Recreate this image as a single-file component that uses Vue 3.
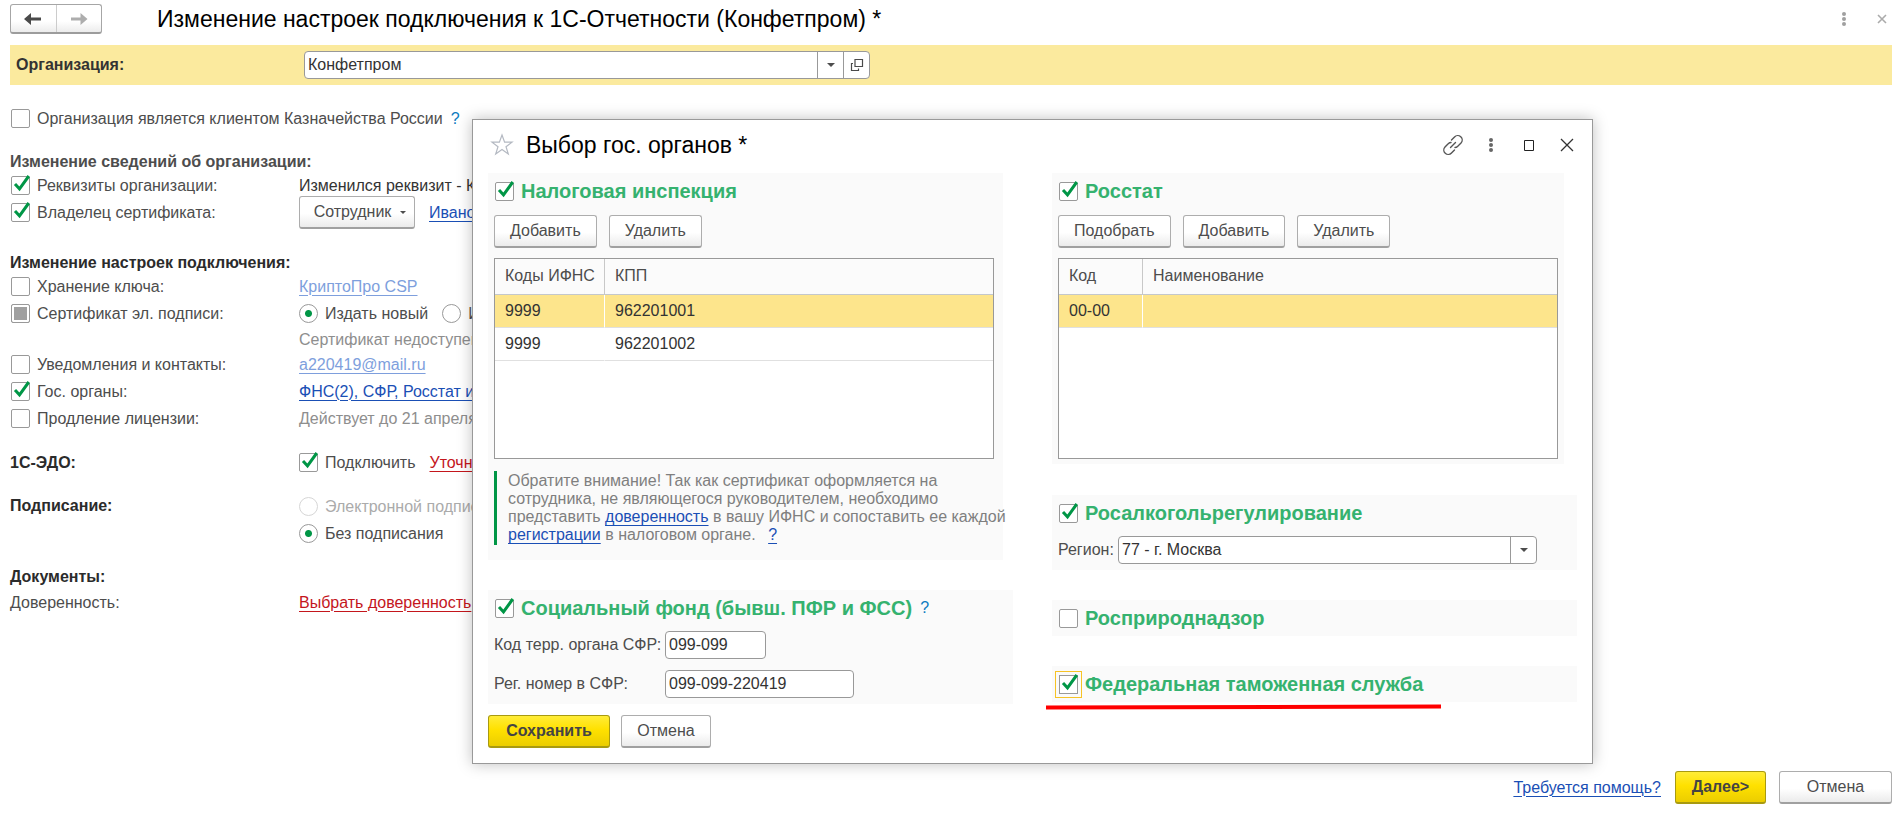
<script setup>
import { ref } from 'vue'

const organization = ref('Конфетпром')
const region = ref('77 - г. Москва')
const sfrCode = ref('099-099')
const sfrNumber = ref('099-099-220419')
const taxRows = [
  { code: '9999', kpp: '962201001' },
  { code: '9999', kpp: '962201002' }
]
const statRows = [{ code: '00-00', name: '' }]
</script>

<template>
  <div class="page">
    <header class="topbar">
      <nav class="history">
        <button type="button" aria-label="Назад">
          <svg width="18" height="14" viewBox="0 0 18 14"><path d="M0 7 7 1V5.500H17V8.500H7V13Z" fill="#4a4a4a" /></svg>
        </button>
        <button type="button" aria-label="Вперед">
          <svg width="18" height="14" viewBox="0 0 18 14"><path d="M17.500 7 10.500 1V5.500H1V8.500H10.500V13Z" fill="#adadad" /></svg>
        </button>
      </nav>
      <h1>Изменение настроек подключения к 1С-Отчетности (Конфетпром) *</h1>
      <div class="top-tools">
        <button type="button" class="icon" aria-label="Меню">
          <svg width="16" height="16" viewBox="0 0 16 16" fill="#a0a0a0"><circle cx="8" cy="3" r="2" /><circle cx="8" cy="8" r="2" /><circle cx="8" cy="13" r="2" /></svg>
        </button>
        <button type="button" class="icon" aria-label="Закрыть">
          <svg width="16" height="16" viewBox="0 0 16 16" fill="none" stroke="#ababab" stroke-width="1.600"><path d="M4 4 12 12M12 4 4 12" /></svg>
        </button>
      </div>
    </header>

    <section class="org-band">
      <label for="org">Организация:</label>
      <div class="combo org-combo">
        <input id="org" v-model="organization" type="text" />
        <button type="button" aria-label="Выбрать"><i class="caret"></i></button>
        <button type="button" aria-label="Открыть">
          <svg width="14" height="14" viewBox="0 0 14 14" fill="none" stroke="#4a4a4a" stroke-width="1.200"><path d="M5 1.500H12.500V8.500H5ZM3 5.500H1.500V12.500H8.500V10.500" /></svg>
        </button>
      </div>
    </section>

    <main class="form">
      <div class="row treasury">
        <label class="check"><input type="checkbox" />Организация является клиентом Казначейства России</label>
        <a class="help" href="#">?</a>
      </div>

      <section class="group">
        <h2 class="soft">Изменение сведений об организации:</h2>
        <div class="row">
          <label class="check first"><input type="checkbox" checked />Реквизиты организации:</label>
          <span class="dark">Изменился реквизит - Кр</span>
        </div>
        <div class="row">
          <label class="check first"><input type="checkbox" checked />Владелец сертификата:</label>
          <button type="button" class="btn owner">Сотрудник<i class="caret small"></i></button>
          <a class="link after" href="#">Ивано</a>
        </div>
      </section>

      <section class="group connection">
        <h2>Изменение настроек подключения:</h2>
        <div class="row">
          <label class="check first"><input type="checkbox" />Хранение ключа:</label>
          <a class="link pale" href="#">КриптоПро CSP</a>
        </div>
        <div class="row">
          <label class="check first"><input type="checkbox" class="mixed" />Сертификат эл. подписи:</label>
          <label class="check"><input type="radio" name="cert" checked />Издать новый</label>
          <label class="check after"><input type="radio" name="cert" />И</label>
        </div>
        <div class="row short">
          <span class="first"></span>
          <span class="muted">Сертификат недоступен</span>
        </div>
        <div class="row">
          <label class="check first"><input type="checkbox" />Уведомления и контакты:</label>
          <a class="link pale" href="#">a220419@mail.ru</a>
        </div>
        <div class="row">
          <label class="check first"><input type="checkbox" checked />Гос. органы:</label>
          <a class="link" href="#">ФНС(2), СФР, Росстат и</a>
        </div>
        <div class="row">
          <label class="check first"><input type="checkbox" />Продление лицензии:</label>
          <span class="muted">Действует до 21 апреля</span>
        </div>
      </section>

      <section class="group row">
        <h2 class="first">1С-ЭДО:</h2>
        <label class="check"><input type="checkbox" checked />Подключить</label>
        <a class="link red after" href="#">Уточни</a>
      </section>

      <section class="group signing">
        <h2 class="first">Подписание:</h2>
        <div>
          <div class="row"><label class="check disabled"><input type="radio" name="sign" disabled />Электронной подпис</label></div>
          <div class="row"><label class="check"><input type="radio" name="sign" checked />Без подписания</label></div>
        </div>
      </section>

      <section class="group docs">
        <h2>Документы:</h2>
        <div class="row">
          <span class="first">Доверенность:</span>
          <a class="link red" href="#">Выбрать доверенность</a>
        </div>
      </section>
    </main>

    <footer class="bottom">
      <a class="link" href="#">Требуется помощь?</a>
      <button type="button" class="btn primary next">Далее&gt;</button>
      <button type="button" class="btn cancel">Отмена</button>
    </footer>

    <div class="dialog" role="dialog" aria-labelledby="dialog-title">
      <header class="dialog-head">
        <button type="button" class="icon" aria-label="В избранное">
          <svg width="24" height="24" viewBox="0 0 24 24" fill="none" stroke="#b4b9c2" stroke-width="1.200"><path d="M12 2 14.600 9.200H22L16 13.700 18.300 21 12 16.600 5.700 21 8 13.700 2 9.200H9.400Z" /></svg>
        </button>
        <h1 id="dialog-title">Выбор гос. органов *</h1>
        <div class="tools">
          <button type="button" class="icon" aria-label="Ссылка">
            <svg width="24" height="24" viewBox="0 0 24 24" fill="none" stroke="#555" stroke-width="1.400" stroke-linecap="round"><path d="M10.500 7 13.500 4A4.200 4.200 0 0 1 20 10L16.500 13.500Q15.500 14.500 14 14.500M13.500 17 10.500 20A4.200 4.200 0 0 1 4 14L7.500 10.500Q8.500 9.500 10 9.500M9.500 14.500 14.500 9.500" /></svg>
          </button>
          <button type="button" class="icon" aria-label="Еще">
            <svg width="24" height="24" viewBox="0 0 24 24" fill="#666"><circle cx="12" cy="7" r="2" /><circle cx="12" cy="12" r="2" /><circle cx="12" cy="17" r="2" /></svg>
          </button>
          <button type="button" class="icon" aria-label="Развернуть">
            <svg width="24" height="24" viewBox="0 0 24 24" fill="none" stroke="#222" stroke-width="1"><path d="M7.500 7.500H16.500V17.500H7.500Z" /></svg>
          </button>
          <button type="button" class="icon" aria-label="Закрыть окно">
            <svg width="24" height="24" viewBox="0 0 24 24" fill="none" stroke="#333" stroke-width="1.300"><path d="M6 6 18 18M18 6 6 18" /></svg>
          </button>
        </div>
      </header>

      <div class="columns">
        <div class="column">
          <section class="panel tax">
            <label class="check title"><input type="checkbox" checked />Налоговая инспекция</label>
            <div class="actions">
              <button type="button" class="btn">Добавить</button>
              <button type="button" class="btn">Удалить</button>
            </div>
            <div class="grid-box">
              <table>
                <colgroup><col class="c-tax" /><col /></colgroup>
                <thead><tr><th>Коды ИФНС</th><th>КПП</th></tr></thead>
                <tbody>
                  <tr v-for="(r, i) in taxRows" :key="i" :class="{ selected: i === 0 }"><td>{{ r.code }}</td><td>{{ r.kpp }}</td></tr>
                </tbody>
              </table>
            </div>
            <p class="note">
              Обратите внимание! Так как сертификат оформляется на<br />
              сотрудника, не являющегося руководителем, необходимо<br />
              представить <a class="link" href="#">доверенность</a> в вашу ИФНС и сопоставить ее каждой<br />
              <a class="link" href="#">регистрации</a> в налоговом органе. <a class="link note-help" href="#">?</a>
            </p>
          </section>

          <section class="panel fund">
            <div class="title-line">
              <label class="check title"><input type="checkbox" checked />Социальный фонд (бывш. ПФР и ФСС)</label>
              <a class="help" href="#">?</a>
            </div>
            <div class="field">
              <label for="sfr-code">Код терр. органа СФР:</label>
              <input id="sfr-code" v-model="sfrCode" class="text code" type="text" />
            </div>
            <div class="field">
              <label for="sfr-number">Рег. номер в СФР:</label>
              <input id="sfr-number" v-model="sfrNumber" class="text number" type="text" />
            </div>
          </section>
        </div>

        <div class="column">
          <section class="panel stat">
            <label class="check title"><input type="checkbox" checked />Росстат</label>
            <div class="actions">
              <button type="button" class="btn">Подобрать</button>
              <button type="button" class="btn">Добавить</button>
              <button type="button" class="btn">Удалить</button>
            </div>
            <div class="grid-box">
              <table>
                <colgroup><col class="c-stat" /><col /></colgroup>
                <thead><tr><th>Код</th><th>Наименование</th></tr></thead>
                <tbody>
                  <tr v-for="(r, i) in statRows" :key="i" class="selected"><td>{{ r.code }}</td><td>{{ r.name }}</td></tr>
                </tbody>
              </table>
            </div>
          </section>

          <section class="panel alcohol">
            <label class="check title"><input type="checkbox" checked />Росалкогольрегулирование</label>
            <div class="region">
              <label for="region">Регион:</label>
              <div class="select-box">
                <select id="region" v-model="region"><option>77 - г. Москва</option></select>
                <span class="select-arrow"><i class="caret"></i></span>
              </div>
            </div>
          </section>

          <section class="panel single">
            <label class="check title"><input type="checkbox" />Росприроднадзор</label>
          </section>

          <section class="panel single customs">
            <label class="check title"><input type="checkbox" class="focused" checked />Федеральная таможенная служба</label>
            <svg class="marker" width="395" height="6" viewBox="0 0 395 6"><path d="M0 3.500 395 2.500" stroke="#f00" stroke-width="4" /></svg>
          </section>
        </div>
      </div>

      <footer class="dialog-actions">
        <button type="button" class="btn primary save">Сохранить</button>
        <button type="button" class="btn dismiss">Отмена</button>
      </footer>
    </div>
  </div>
</template>

<style>
body { background: #fff; }
</style>

<style scoped>
* { box-sizing: border-box; }
.page {
  position: relative;
  display: flex;
  flex-direction: column;
  min-height: 100vh;
  padding: 4px 10px 10px;
  overflow: hidden;
  font: 16px/20px "Liberation Sans", Arial, sans-serif;
  color: #4d4d4d;
}
button, input, select { font: inherit; color: inherit; margin: 0; }
h1, h2, p { margin: 0; }
h1 { font-size: 23px; line-height: 30px; font-weight: 400; color: #000; white-space: nowrap; }
h2 { font-size: 16px; line-height: 20px; color: #2b2b2b; white-space: nowrap; }
h2.soft { color: #4d4d4d; }
.icon { display: flex; padding: 0; border: 0; background: none; }
.dark { color: #333; }
.muted { color: #8e8e8e; }

.topbar { display: flex; align-items: center; height: 30px; }
.history {
  display: flex;
  width: 92px;
  height: 30px;
  margin-right: 55px;
  border: 1px solid #a6a6a6;
  border-bottom: 2px solid #9c9c9c;
  border-radius: 3px;
  background: linear-gradient(#fff 60%, #ececec);
}
.history button { flex: 1; display: flex; align-items: center; justify-content: center; padding: 0; border: 0; background: none; }
.history button + button { border-left: 1px solid #ccc; }
.top-tools { display: flex; gap: 22px; margin-left: auto; padding-right: 2px; }

.org-band { display: flex; align-items: center; height: 40px; margin-top: 11px; padding-left: 6px; background: #fbea9e; }
.org-band > label { width: 288px; font-weight: 700; color: #333; }
.combo { display: flex; height: 28px; border: 1px solid #999; border-radius: 4px; background: #fff; overflow: hidden; }
.org-combo { width: 566px; }
.combo input { flex: 1; min-width: 0; padding: 0 3px; border: 0; outline: 0; background: none; color: #333; }
.combo button { display: flex; align-items: center; justify-content: center; width: 26px; padding: 0; border: 0; border-left: 1px solid #999; background: none; }
.caret { display: block; border: 4px solid transparent; border-top-color: #4d4d4d; border-bottom: 0; }
.caret.small { border-width: 3px; border-bottom: 0; }

.form { display: flex; flex-direction: column; padding-top: 20px; }
.row { display: flex; align-items: center; height: 27px; white-space: nowrap; }
.row.short { height: 24px; padding-top: 2px; }
.check { display: flex; align-items: center; white-space: nowrap; }
.first { flex: none; width: 289px; }
.check.first, .treasury .check, .title { padding-left: 1px; }
.check input {
  position: relative;
  flex: none;
  appearance: none;
  width: 19px;
  height: 19px;
  margin-right: 7px;
  border: 1px solid #999;
  border-radius: 2px;
  background: #fff;
}
.check input[type="checkbox"]:checked::after {
  content: "";
  position: absolute;
  left: 1px;
  top: -3px;
  width: 18px;
  height: 18px;
  background: url("data:image/svg+xml,%3Csvg xmlns='http://www.w3.org/2000/svg' viewBox='0 0 18 18'%3E%3Cpath d='M2 10 6.500 14.800 15.800 2' fill='none' stroke='%23009646' stroke-width='3'/%3E%3C/svg%3E");
}
.check input.mixed { background: #a0a0a0; box-shadow: inset 0 0 0 2px #fff; }
.check input[type="radio"] { border-radius: 50%; }
.check input[type="radio"]:checked { background: radial-gradient(circle, #009646 3px, #fff 4px); }
.check.disabled { color: #ababab; }
.check.disabled input { border-color: #d6d6d6; }
.after { margin-left: 14px; }
.link { color: #1a4fb5; text-decoration: underline; text-underline-offset: 3px; text-decoration-thickness: 1px; }
.link.pale { color: #7e9fdd; }
.link.red { color: #c4161c; }
.help { color: #0c7bc0; text-decoration: none; margin-left: 8px; }
.group { margin-top: 20px; }
.connection { margin-top: 27px; }
.group.row { margin-top: 17px; }
.signing { display: flex; margin-top: 17px; }
.signing h2 { padding-top: 3px; }
.docs h2 { margin-bottom: 2px; }

.btn {
  display: flex;
  align-items: center;
  justify-content: center;
  height: 33px;
  padding: 0 16px;
  border: 1px solid #adadad;
  border-bottom: 2px solid #a0a0a0;
  border-radius: 3px;
  background: linear-gradient(#fff 55%, #ebebeb);
  white-space: nowrap;
}
.actions .btn { padding: 0 15px; }
.btn.primary { border-color: #a89a10; background: linear-gradient(#ffec38, #ffe100 45%, #ebcd00); font-weight: 700; color: #444; }
.owner { gap: 9px; width: 116px; padding: 0 6px 0 12px; }

.bottom { display: flex; align-items: center; justify-content: flex-end; margin-top: auto; }
.next { width: 91px; margin: 0 13px 0 14px; }
.cancel { width: 113px; }

.dialog {
  position: absolute;
  top: 119px;
  left: 472px;
  width: 1121px;
  padding: 11px 13px 15px 15px;
  border: 1px solid #999;
  background: #fff;
  box-shadow: 0 0 14px rgba(0, 0, 0, 0.25);
}
.dialog-head { display: flex; align-items: center; height: 28px; padding-left: 2px; margin-bottom: 14px; }
.dialog-head h1 { margin-left: 12px; }
.tools { display: flex; gap: 14px; margin-left: auto; }
.columns { display: flex; gap: 39px; margin-right: 2px; }
.column { flex: 1; min-width: 0; }
.panel { background: #fafafa; padding: 0 6px; }
.title { height: 36px; font-size: 20px; font-weight: 700; color: #35b26f; }
.tax { margin-right: 10px; height: 387px; }
.stat { margin-right: 13px; height: 291px; }
.actions { display: flex; gap: 12px; margin-top: 6px; }
.grid-box { width: 500px; max-width: 100%; height: 201px; margin-top: 10px; border: 1px solid #999; background: #fff; }
table { width: 100%; border-collapse: separate; border-spacing: 0; table-layout: fixed; }
.c-tax { width: 110px; }
.c-stat { width: 84px; }
th, td { padding: 0 9px 0 10px; white-space: nowrap; }
th { height: 36px; padding-bottom: 2px; border-bottom: 1px solid #c4c8cc; background: #fbfbfb; font-weight: 400; text-align: left; }
td { height: 33px; border-bottom: 1px solid #e0e0e0; color: #333; }
th:first-child { border-right: 1px solid #c8c8c8; }
td:first-child { border-right: 1px solid #fff; }
.selected td { background: #fde58c; background-clip: padding-box; }
.note { margin-top: 12px; padding: 1px 0 1px 11px; border-left: 3px solid #009646; line-height: 18px; color: #7f7f7f; white-space: nowrap; }
.note-help { margin-left: 8px; }
.fund { height: 114px; margin-top: 30px; }
.title-line { display: flex; align-items: center; }
.field { display: flex; align-items: center; height: 28px; margin-top: 5px; }
.field + .field { margin-top: 11px; }
.field label { width: 171px; white-space: nowrap; }
.text { height: 28px; padding: 0 3px; border: 1px solid #999; border-radius: 4px; background: #fff; color: #333; outline: 0; }
.text.code { width: 101px; }
.text.number { width: 189px; }
.alcohol { margin-top: 31px; padding-bottom: 5px; }
.region { display: flex; align-items: center; margin-top: 5px; padding-bottom: 1px; }
.region label { width: 60px; }
.select-box { position: relative; flex: none; width: 419px; height: 28px; }
.select-box select { appearance: none; width: 100%; height: 100%; padding: 0 30px 0 3px; border: 1px solid #999; border-radius: 4px; background: #fff; color: #333; }
.select-arrow { position: absolute; top: 1px; right: 1px; bottom: 1px; width: 26px; display: flex; align-items: center; justify-content: center; border-left: 1px solid #999; pointer-events: none; }
.single { margin-top: 30px; }
.customs { position: relative; }
.check input.focused { outline: 1px solid #f7c325; outline-offset: 3px; border-radius: 0; }
.marker { position: absolute; left: -6px; top: 38px; }
.dialog-actions { display: flex; gap: 11px; margin-top: 11px; }
.save { width: 122px; }
.dismiss { width: 90px; }
</style>
